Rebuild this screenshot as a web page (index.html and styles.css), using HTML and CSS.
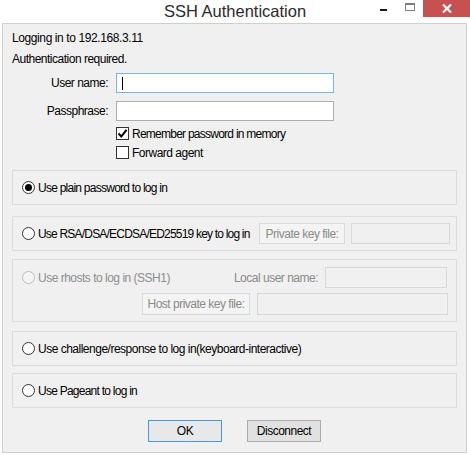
FILE: index.html
```html
<!DOCTYPE html>
<html>
<head>
<meta charset="utf-8">
<link rel="stylesheet" href="styles.css">
</head>
<body>
<div class="titlebar">
  <div class="spacer"></div>
  <div class="title">SSH Authentication</div>
  <div class="controls">
    <div class="cbtn min"><span class="min-bar"></span></div>
    <div class="cbtn max"><span class="max-box"></span></div>
    <div class="cbtn close">
      <svg width="10" height="9" viewBox="0 0 10 9"><path d="M1 0.5 L9 8.5 M9 0.5 L1 8.5" stroke="#fff" stroke-width="2.2" fill="none"/></svg>
    </div>
  </div>
</div>
<div class="client">
  <div class="line l1 digits">Logging in to 192.168.3.11</div>
  <div class="line l2">Authentication required.</div>
  <div class="row r-user">
    <label class="lbl">User name:</label>
    <div class="input focus"><span class="caret"></span></div>
  </div>
  <div class="row r-pass">
    <label class="lbl">Passphrase:</label>
    <div class="input"></div>
  </div>
  <div class="chk-row c1">
    <span class="chk"><svg width="11" height="11" viewBox="0 0 11 11"><path d="M1.5 5.5 L4.3 8.5 L9.5 1.8" stroke="#000" stroke-width="2" fill="none"/></svg></span>
    <span class="tight">Remember password in memory</span>
  </div>
  <div class="chk-row c2">
    <span class="chk"></span>
    <span>Forward agent</span>
  </div>

  <div class="group g1">
    <div class="opt"><span class="radio on"></span><span class="tight">Use plain password to log in</span></div>
  </div>
  <div class="group g2">
    <div class="opt"><span class="radio"></span><span class="t-rsa">Use RSA/DSA/ECDSA/ED25519 key to log in</span></div>
    <div class="dbox pk">Private key file:</div>
    <div class="dinput pki"></div>
  </div>
  <div class="group g3">
    <div class="g3row r1">
      <div class="opt dis"><span class="radio dis"></span><span>Use rhosts to log in (SSH1)</span></div>
      <span class="dlabel">Local user name:</span>
      <div class="dinput lu"></div>
    </div>
    <div class="g3row r2">
      <div class="dbox hk">Host private key file:</div>
      <div class="dinput hki"></div>
    </div>
  </div>
  <div class="group g4">
    <div class="opt"><span class="radio"></span><span>Use challenge/response to log in(keyboard-interactive)</span></div>
  </div>
  <div class="group g5">
    <div class="opt"><span class="radio"></span><span class="tight">Use Pageant to log in</span></div>
  </div>
  <div class="buttons">
    <div class="btn ok">OK</div>
    <div class="btn">Disconnect</div>
  </div>
</div>
</body>
</html>
```
FILE: styles.css
```css
html, body {
  margin: 0;
  padding: 0;
  background: #ffffff;
}
body {
  width: 470px;
  height: 455px;
  overflow: hidden;
  font-family: "Liberation Sans", Arial, sans-serif;
  font-size: 12px;
  color: #000;
  letter-spacing: -0.5px;
}
.titlebar {
  height: 23px;
  display: grid;
  grid-template-columns: 1fr auto 1fr;
  align-items: start;
}
.title {
  font-size: 16.5px;
  letter-spacing: 0;
  color: #2b2b2b;
  line-height: 22px;
}
.controls {
  display: flex;
  justify-content: flex-end;
}
.cbtn {
  height: 17px;
  display: flex;
  align-items: center;
  justify-content: center;
}
.min { width: 27px; }
.min-bar {
  width: 7px;
  height: 2px;
  background: #1a1a1a;
  margin-top: 2px;
}
.max { width: 26px; }
.max-box {
  width: 8px;
  height: 5px;
  border: 1px solid #808080;
  border-top-width: 2px;
  margin-top: -4px;
}
.close {
  width: 47px;
  background: #c75050;
}
.client {
  box-sizing: border-box;
  margin-left: 2px;
  width: 465px;
  height: 430px;
  border: 1px solid #cfcfcf;
  background: #f0f0f0;
  padding: 6px 0 0 9px;
}
.line {
  line-height: 16px;
  height: 16px;
}
.digits { letter-spacing: -0.4px; }
.l2 { margin-top: 5px; }
.row {
  display: flex;
  align-items: center;
  height: 20px;
}
.r-user { margin-top: 6px; }
.r-pass { margin-top: 8px; }
.lbl {
  width: 96px;
  margin-right: 8px;
  text-align: right;
}
.input {
  box-sizing: border-box;
  width: 218px;
  height: 20px;
  background: #fff;
  border: 1px solid #abadb3;
  display: flex;
  align-items: center;
}
.input.focus { border-color: #7eb4ea; }
.caret {
  width: 1px;
  height: 13px;
  background: #000;
  margin-left: 5px;
}
.chk-row {
  display: flex;
  align-items: center;
  height: 17px;
  padding-left: 104px;
}
.c1 { margin-top: 4px; }
.c2 { margin-top: 2px; }
.chk {
  box-sizing: border-box;
  width: 13px;
  height: 13px;
  border: 1px solid #333;
  background: #fff;
  margin-right: 3px;
  display: flex;
  align-items: center;
  justify-content: center;
}
.tight { letter-spacing: -0.75px; }
.group {
  box-sizing: border-box;
  width: 445px;
  height: 35px;
  border: 1px solid #dcdcdc;
  display: flex;
  align-items: center;
  padding-left: 9px;
}
.g1 { margin-top: 9px; }
.g2 { margin-top: 11px; padding-right: 6px; }
.g3 {
  margin-top: 8px;
  height: 63px;
  flex-direction: column;
  align-items: stretch;
  justify-content: flex-start;
  padding-top: 7px;
  padding-right: 8px;
}
.g4 { margin-top: 9px; }
.g5 { margin-top: 7px; }
.opt {
  display: flex;
  align-items: center;
}
.radio {
  box-sizing: border-box;
  width: 13px;
  height: 13px;
  border-radius: 50%;
  border: 1px solid #333;
  background: #fff;
  margin-right: 3px;
  display: flex;
  align-items: center;
  justify-content: center;
}
.radio.on::after {
  content: "";
  width: 7px;
  height: 7px;
  border-radius: 50%;
  background: #000;
}
.radio.dis {
  border-color: #bcbcbc;
  background: #f4f4f4;
}
.opt.dis { color: #8d8d8d; }
.t-rsa { letter-spacing: -0.8px; }
.dbox {
  box-sizing: border-box;
  height: 21px;
  border: 1px solid #d9d9d9;
  background: #f4f4f4;
  color: #8a8a8a;
  display: flex;
  align-items: center;
  justify-content: center;
}
.dinput {
  box-sizing: border-box;
  height: 21px;
  border: 1px solid #d9d9d9;
  background: #f0f0f0;
}
.pk { width: 86px; margin-left: auto; }
.pki { width: 99px; margin-left: 6px; }
.g3row {
  display: flex;
  align-items: center;
}
.r1 { height: 21px; padding-right: 1px; }
.r2 { height: 22px; margin-top: 5px; justify-content: flex-end; }
.dlabel {
  color: #8a8a8a;
  margin-left: auto;
  margin-right: 7px;
}
.lu { width: 122px; }
.hk { width: 108px; height: 22px; }
.hki { width: 191px; height: 22px; margin-left: 7px; }
.buttons {
  display: flex;
  margin-top: 12px;
  padding-left: 136px;
  gap: 25px;
}
.btn {
  box-sizing: border-box;
  width: 74px;
  height: 22px;
  border: 1px solid #adadad;
  background: #e1e1e1;
  display: flex;
  align-items: center;
  justify-content: center;
}
.btn.ok {
  border-color: #3c9ce6;
  background: #e8e8e8;
}
```
